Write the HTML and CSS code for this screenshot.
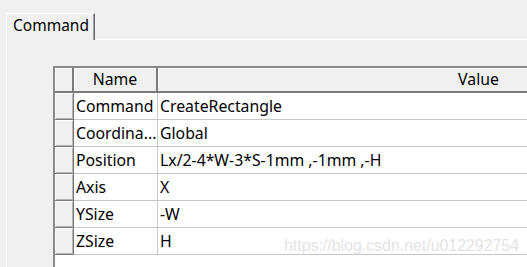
FILE: index.html
```html
<!DOCTYPE html>
<html lang="en">
<head>
    <meta charset="UTF-8">
    <title>Command</title>
    <link rel="stylesheet" href="styles.css">
</head>
<body>
<div class="tabs">
    <div class="tab">Command</div>
    <div class="tab-fill"></div>
</div>
<div class="panel">
    <div class="grid">
        <div class="row head">
            <div class="corner"></div>
            <div class="hcell name">Name</div>
            <div class="hcell value">Value</div>
        </div>
        <div class="row">
            <div class="rowhead"></div>
            <div class="cell name">Command</div>
            <div class="cell value">CreateRectangle</div>
        </div>
        <div class="row">
            <div class="rowhead"></div>
            <div class="cell name">Coordina...</div>
            <div class="cell value">Global</div>
        </div>
        <div class="row">
            <div class="rowhead"></div>
            <div class="cell name">Position</div>
            <div class="cell value">Lx/2-4*W-3*S-1mm ,-1mm ,-H</div>
        </div>
        <div class="row">
            <div class="rowhead"></div>
            <div class="cell name">Axis</div>
            <div class="cell value">X</div>
        </div>
        <div class="row">
            <div class="rowhead"></div>
            <div class="cell name">YSize</div>
            <div class="cell value">-W</div>
        </div>
        <div class="row">
            <div class="rowhead"></div>
            <div class="cell name">ZSize</div>
            <div class="cell value">H<span class="mark">https://blog.csdn.net/u012292754</span></div>
        </div>
    </div>
</div>
</body>
</html>
```

FILE: styles.css
```css
html, body {
    margin: 0;
    height: 100%;
    overflow: hidden;
}

body {
    background: #f0f0f0;
    font-family: "Noto Sans", "Open Sans", sans-serif;
    font-size: 15.8px;
    color: #000;
}

.tabs {
    display: flex;
    padding: 13px 0 0 6px;
}

.tab {
    width: 81px;
    height: 26px;
    padding-left: 6px;
    line-height: 23px;
    font-size: 15.5px;
    border-left: 1px solid #fff;
    border-top: 1px solid #fff;
    border-right: 1px solid #696969;
    box-shadow: inset -1px 0 0 #a0a0a0;
}

.tab-fill {
    flex: 1;
    border-bottom: 1px solid #fff;
}

.panel {
    margin-left: 6px;
    border-left: 1px solid #fff;
    padding: 26px 0 0 46px;
    height: 400px;
}

.grid {
    width: 760px;
    height: 400px;
    border-left: 2px solid #8a8a8a;
    border-top: 2px solid #8a8a8a;
    background: #fff;
}

.row {
    display: flex;
    height: 27px;
}

.row.head {
    height: 25px;
}

.corner, .rowhead, .hcell {
    box-sizing: border-box;
    background: #f0f0f0;
    border-right: 2px solid #7a7a7a;
    border-bottom: 2px solid #7a7a7a;
    box-shadow: inset 1px 1px 0 #fff;
}

.corner, .rowhead {
    width: 19px;
}

.rowhead {
    border-width: 0 1px 1px 0;
    border-color: #7a7a7a;
    box-shadow: inset 1px 1px 0 #fff, inset -1px -1px 0 #b4b4b4;
}

.hcell {
    line-height: 23px;
    text-align: center;
}

.hcell.name {
    width: 84px;
}

.hcell.value {
    width: 643px;
}

.cell {
    box-sizing: border-box;
    border-right: 1px solid #c8c8c8;
    border-bottom: 1px solid #c8c8c8;
    line-height: 27px;
    padding-left: 2px;
    white-space: nowrap;
    overflow: hidden;
}

.cell.name {
    width: 84px;
}

.cell.value {
    width: 643px;
    position: relative;
}

.mark {
    position: absolute;
    left: 126px;
    top: 9px;
    line-height: 18px;
    font-family: "Liberation Sans", Arial, sans-serif;
    font-size: 15.9px;
    color: #e3e3e3;
}
```
